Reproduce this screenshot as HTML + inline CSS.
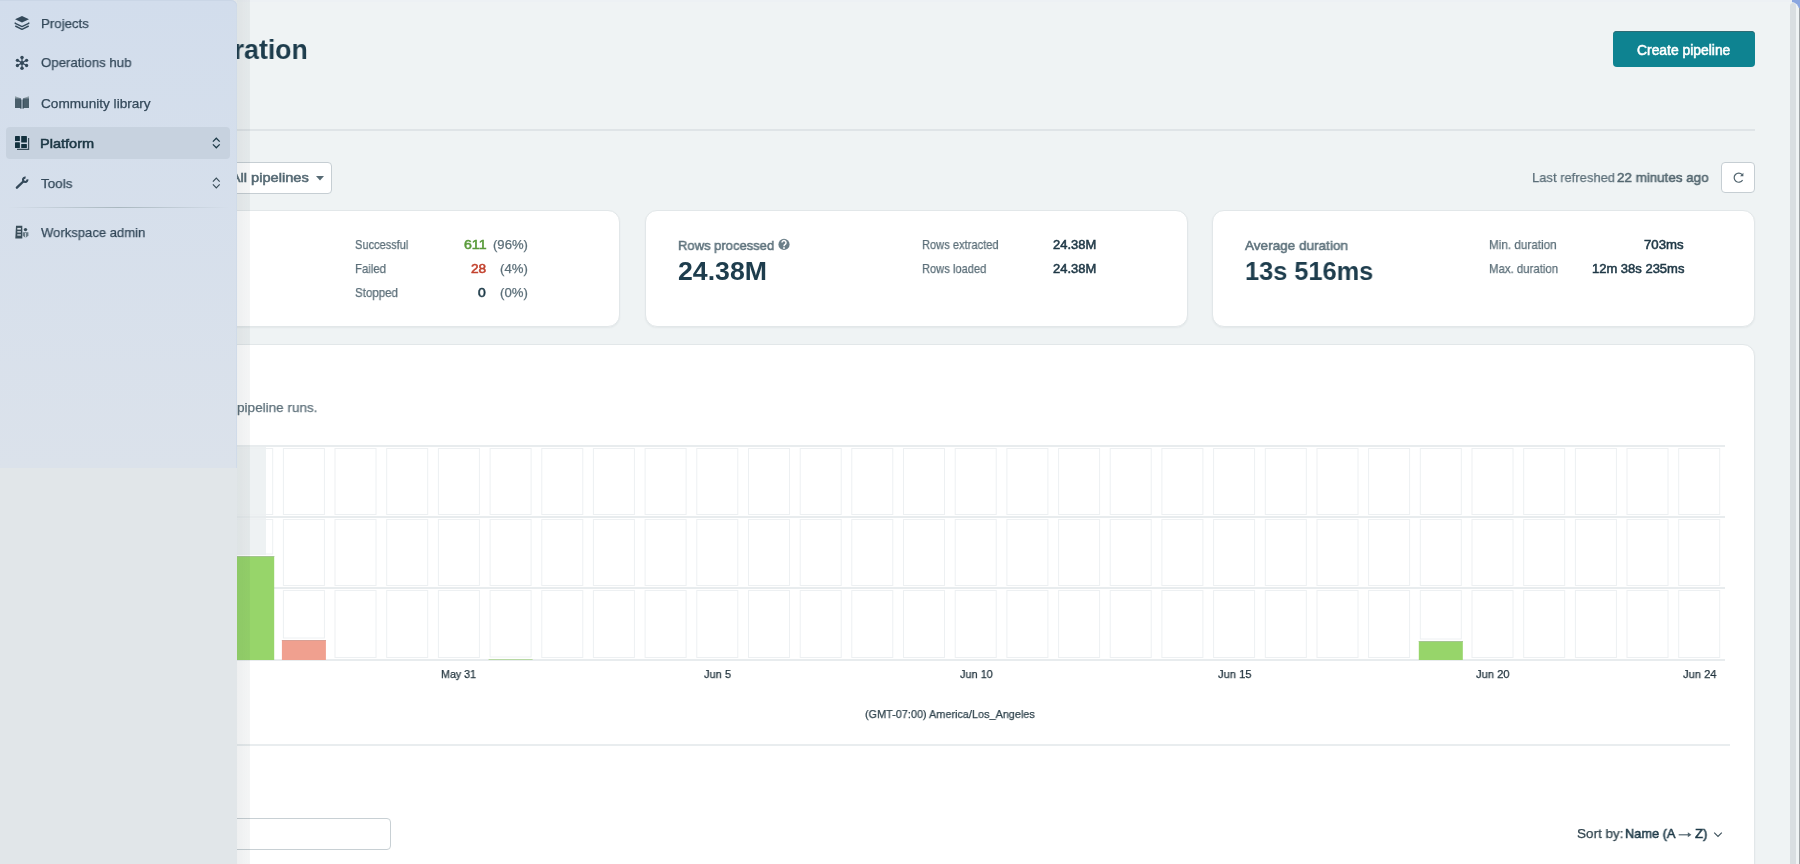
<!DOCTYPE html>
<html><head><meta charset="utf-8"><style>
html,body{margin:0;padding:0}
body{width:1800px;height:864px;overflow:hidden;position:relative;background:#edf1f4;font-family:"Liberation Sans", sans-serif}
.t{position:absolute;white-space:nowrap;line-height:1;transform-origin:0 0;will-change:transform}
.r{-webkit-text-stroke:0.25px currentColor}
.s{-webkit-text-stroke:0.55px currentColor}
.abs{position:absolute}
</style></head><body>
<div class="abs" style="right:0;top:0;width:8px;height:8px;background:#8aa6df"></div>
<div class="abs" style="left:0;top:2px;width:1799px;height:862px;background:#eff3f4;border-top-right-radius:8px"></div>
<div class="abs" style="left:1799px;top:8px;width:1px;height:856px;background:#9ea3a6"></div>
<div class="abs" style="left:1790px;top:3px;width:6px;height:861px;background:#d9dee1;border-radius:3px 3px 0 0"></div>
<!-- header -->
<div class="abs" style="left:1613px;top:31px;width:142px;height:36px;background:#0e8391;border-radius:4px;box-shadow:inset 0 1px 0 #2d6c75"></div>
<div class="abs" style="left:79px;top:129px;width:1676px;height:2px;background:#dfe4e7"></div>
<div class="abs" style="left:120px;top:162px;width:210px;height:30px;background:#fff;border:1px solid #c6ced3;border-radius:4px"></div>
<svg class="abs" style="left:0;top:0" width="1800" height="864">
<path d="M316 176 L324 176 L320 180.5 Z" fill="#566a74"/>
</svg>
<div class="abs" style="left:1721px;top:162px;width:32px;height:29px;background:#fff;border:1px solid #c6ced3;border-radius:4px"></div>
<!-- cards -->
<div class="abs" style="left:78px;top:210px;width:540px;height:115px;background:#fff;border:1px solid #e2e7e9;border-radius:12px;box-shadow:0 1px 2px rgba(30,50,60,0.06)"></div>
<div class="abs" style="left:645px;top:210px;width:541px;height:115px;background:#fff;border:1px solid #e2e7e9;border-radius:12px;box-shadow:0 1px 2px rgba(30,50,60,0.06)"></div>
<div class="abs" style="left:1212px;top:210px;width:541px;height:115px;background:#fff;border:1px solid #e2e7e9;border-radius:12px;box-shadow:0 1px 2px rgba(30,50,60,0.06)"></div>
<div class="abs" style="left:78px;top:344px;width:1675px;height:600px;background:#fff;border:1px solid #e2e7e9;border-radius:12px;box-shadow:0 1px 2px rgba(30,50,60,0.06)"></div>
<div class="abs" style="left:79px;top:744px;width:1651px;height:2px;background:#e9edef"></div>
<div class="abs" style="left:100px;top:818px;width:289px;height:30px;background:#fff;border:1px solid #c8d0d4;border-radius:4px"></div>
<svg class="abs" style="left:0;top:0" width="1800" height="864">
<rect x="230" y="447" width="36" height="108" fill="#eef2f3"/>
<rect x="180.0" y="448.5" width="41" height="66.0" fill="none" stroke="#edf0f2" stroke-width="1"/>
<rect x="180.0" y="519.5" width="41" height="66.0" fill="none" stroke="#edf0f2" stroke-width="1"/>
<rect x="180.0" y="590.5" width="41" height="67.0" fill="none" stroke="#edf0f2" stroke-width="1"/>
<rect x="231.7" y="448.5" width="41" height="66.0" fill="none" stroke="#edf0f2" stroke-width="1"/>
<rect x="231.7" y="519.5" width="41" height="34.5" fill="none" stroke="#edf0f2" stroke-width="1"/>
<rect x="283.4" y="448.5" width="41" height="66.0" fill="none" stroke="#edf0f2" stroke-width="1"/>
<rect x="283.4" y="519.5" width="41" height="66.0" fill="none" stroke="#edf0f2" stroke-width="1"/>
<rect x="283.4" y="590.5" width="41" height="47.5" fill="none" stroke="#edf0f2" stroke-width="1"/>
<rect x="335.0" y="448.5" width="41" height="66.0" fill="none" stroke="#edf0f2" stroke-width="1"/>
<rect x="335.0" y="519.5" width="41" height="66.0" fill="none" stroke="#edf0f2" stroke-width="1"/>
<rect x="335.0" y="590.5" width="41" height="67.0" fill="none" stroke="#edf0f2" stroke-width="1"/>
<rect x="386.7" y="448.5" width="41" height="66.0" fill="none" stroke="#edf0f2" stroke-width="1"/>
<rect x="386.7" y="519.5" width="41" height="66.0" fill="none" stroke="#edf0f2" stroke-width="1"/>
<rect x="386.7" y="590.5" width="41" height="67.0" fill="none" stroke="#edf0f2" stroke-width="1"/>
<rect x="438.4" y="448.5" width="41" height="66.0" fill="none" stroke="#edf0f2" stroke-width="1"/>
<rect x="438.4" y="519.5" width="41" height="66.0" fill="none" stroke="#edf0f2" stroke-width="1"/>
<rect x="438.4" y="590.5" width="41" height="67.0" fill="none" stroke="#edf0f2" stroke-width="1"/>
<rect x="490.1" y="448.5" width="41" height="66.0" fill="none" stroke="#edf0f2" stroke-width="1"/>
<rect x="490.1" y="519.5" width="41" height="66.0" fill="none" stroke="#edf0f2" stroke-width="1"/>
<rect x="490.1" y="590.5" width="41" height="66.5" fill="none" stroke="#edf0f2" stroke-width="1"/>
<rect x="541.8" y="448.5" width="41" height="66.0" fill="none" stroke="#edf0f2" stroke-width="1"/>
<rect x="541.8" y="519.5" width="41" height="66.0" fill="none" stroke="#edf0f2" stroke-width="1"/>
<rect x="541.8" y="590.5" width="41" height="67.0" fill="none" stroke="#edf0f2" stroke-width="1"/>
<rect x="593.4" y="448.5" width="41" height="66.0" fill="none" stroke="#edf0f2" stroke-width="1"/>
<rect x="593.4" y="519.5" width="41" height="66.0" fill="none" stroke="#edf0f2" stroke-width="1"/>
<rect x="593.4" y="590.5" width="41" height="67.0" fill="none" stroke="#edf0f2" stroke-width="1"/>
<rect x="645.1" y="448.5" width="41" height="66.0" fill="none" stroke="#edf0f2" stroke-width="1"/>
<rect x="645.1" y="519.5" width="41" height="66.0" fill="none" stroke="#edf0f2" stroke-width="1"/>
<rect x="645.1" y="590.5" width="41" height="67.0" fill="none" stroke="#edf0f2" stroke-width="1"/>
<rect x="696.8" y="448.5" width="41" height="66.0" fill="none" stroke="#edf0f2" stroke-width="1"/>
<rect x="696.8" y="519.5" width="41" height="66.0" fill="none" stroke="#edf0f2" stroke-width="1"/>
<rect x="696.8" y="590.5" width="41" height="67.0" fill="none" stroke="#edf0f2" stroke-width="1"/>
<rect x="748.5" y="448.5" width="41" height="66.0" fill="none" stroke="#edf0f2" stroke-width="1"/>
<rect x="748.5" y="519.5" width="41" height="66.0" fill="none" stroke="#edf0f2" stroke-width="1"/>
<rect x="748.5" y="590.5" width="41" height="67.0" fill="none" stroke="#edf0f2" stroke-width="1"/>
<rect x="800.2" y="448.5" width="41" height="66.0" fill="none" stroke="#edf0f2" stroke-width="1"/>
<rect x="800.2" y="519.5" width="41" height="66.0" fill="none" stroke="#edf0f2" stroke-width="1"/>
<rect x="800.2" y="590.5" width="41" height="67.0" fill="none" stroke="#edf0f2" stroke-width="1"/>
<rect x="851.8" y="448.5" width="41" height="66.0" fill="none" stroke="#edf0f2" stroke-width="1"/>
<rect x="851.8" y="519.5" width="41" height="66.0" fill="none" stroke="#edf0f2" stroke-width="1"/>
<rect x="851.8" y="590.5" width="41" height="67.0" fill="none" stroke="#edf0f2" stroke-width="1"/>
<rect x="903.5" y="448.5" width="41" height="66.0" fill="none" stroke="#edf0f2" stroke-width="1"/>
<rect x="903.5" y="519.5" width="41" height="66.0" fill="none" stroke="#edf0f2" stroke-width="1"/>
<rect x="903.5" y="590.5" width="41" height="67.0" fill="none" stroke="#edf0f2" stroke-width="1"/>
<rect x="955.2" y="448.5" width="41" height="66.0" fill="none" stroke="#edf0f2" stroke-width="1"/>
<rect x="955.2" y="519.5" width="41" height="66.0" fill="none" stroke="#edf0f2" stroke-width="1"/>
<rect x="955.2" y="590.5" width="41" height="67.0" fill="none" stroke="#edf0f2" stroke-width="1"/>
<rect x="1006.9" y="448.5" width="41" height="66.0" fill="none" stroke="#edf0f2" stroke-width="1"/>
<rect x="1006.9" y="519.5" width="41" height="66.0" fill="none" stroke="#edf0f2" stroke-width="1"/>
<rect x="1006.9" y="590.5" width="41" height="67.0" fill="none" stroke="#edf0f2" stroke-width="1"/>
<rect x="1058.6" y="448.5" width="41" height="66.0" fill="none" stroke="#edf0f2" stroke-width="1"/>
<rect x="1058.6" y="519.5" width="41" height="66.0" fill="none" stroke="#edf0f2" stroke-width="1"/>
<rect x="1058.6" y="590.5" width="41" height="67.0" fill="none" stroke="#edf0f2" stroke-width="1"/>
<rect x="1110.2" y="448.5" width="41" height="66.0" fill="none" stroke="#edf0f2" stroke-width="1"/>
<rect x="1110.2" y="519.5" width="41" height="66.0" fill="none" stroke="#edf0f2" stroke-width="1"/>
<rect x="1110.2" y="590.5" width="41" height="67.0" fill="none" stroke="#edf0f2" stroke-width="1"/>
<rect x="1161.9" y="448.5" width="41" height="66.0" fill="none" stroke="#edf0f2" stroke-width="1"/>
<rect x="1161.9" y="519.5" width="41" height="66.0" fill="none" stroke="#edf0f2" stroke-width="1"/>
<rect x="1161.9" y="590.5" width="41" height="67.0" fill="none" stroke="#edf0f2" stroke-width="1"/>
<rect x="1213.6" y="448.5" width="41" height="66.0" fill="none" stroke="#edf0f2" stroke-width="1"/>
<rect x="1213.6" y="519.5" width="41" height="66.0" fill="none" stroke="#edf0f2" stroke-width="1"/>
<rect x="1213.6" y="590.5" width="41" height="67.0" fill="none" stroke="#edf0f2" stroke-width="1"/>
<rect x="1265.3" y="448.5" width="41" height="66.0" fill="none" stroke="#edf0f2" stroke-width="1"/>
<rect x="1265.3" y="519.5" width="41" height="66.0" fill="none" stroke="#edf0f2" stroke-width="1"/>
<rect x="1265.3" y="590.5" width="41" height="67.0" fill="none" stroke="#edf0f2" stroke-width="1"/>
<rect x="1317.0" y="448.5" width="41" height="66.0" fill="none" stroke="#edf0f2" stroke-width="1"/>
<rect x="1317.0" y="519.5" width="41" height="66.0" fill="none" stroke="#edf0f2" stroke-width="1"/>
<rect x="1317.0" y="590.5" width="41" height="67.0" fill="none" stroke="#edf0f2" stroke-width="1"/>
<rect x="1368.6" y="448.5" width="41" height="66.0" fill="none" stroke="#edf0f2" stroke-width="1"/>
<rect x="1368.6" y="519.5" width="41" height="66.0" fill="none" stroke="#edf0f2" stroke-width="1"/>
<rect x="1368.6" y="590.5" width="41" height="67.0" fill="none" stroke="#edf0f2" stroke-width="1"/>
<rect x="1420.3" y="448.5" width="41" height="66.0" fill="none" stroke="#edf0f2" stroke-width="1"/>
<rect x="1420.3" y="519.5" width="41" height="66.0" fill="none" stroke="#edf0f2" stroke-width="1"/>
<rect x="1420.3" y="590.5" width="41" height="48.5" fill="none" stroke="#edf0f2" stroke-width="1"/>
<rect x="1472.0" y="448.5" width="41" height="66.0" fill="none" stroke="#edf0f2" stroke-width="1"/>
<rect x="1472.0" y="519.5" width="41" height="66.0" fill="none" stroke="#edf0f2" stroke-width="1"/>
<rect x="1472.0" y="590.5" width="41" height="67.0" fill="none" stroke="#edf0f2" stroke-width="1"/>
<rect x="1523.7" y="448.5" width="41" height="66.0" fill="none" stroke="#edf0f2" stroke-width="1"/>
<rect x="1523.7" y="519.5" width="41" height="66.0" fill="none" stroke="#edf0f2" stroke-width="1"/>
<rect x="1523.7" y="590.5" width="41" height="67.0" fill="none" stroke="#edf0f2" stroke-width="1"/>
<rect x="1575.4" y="448.5" width="41" height="66.0" fill="none" stroke="#edf0f2" stroke-width="1"/>
<rect x="1575.4" y="519.5" width="41" height="66.0" fill="none" stroke="#edf0f2" stroke-width="1"/>
<rect x="1575.4" y="590.5" width="41" height="67.0" fill="none" stroke="#edf0f2" stroke-width="1"/>
<rect x="1627.0" y="448.5" width="41" height="66.0" fill="none" stroke="#edf0f2" stroke-width="1"/>
<rect x="1627.0" y="519.5" width="41" height="66.0" fill="none" stroke="#edf0f2" stroke-width="1"/>
<rect x="1627.0" y="590.5" width="41" height="67.0" fill="none" stroke="#edf0f2" stroke-width="1"/>
<rect x="1678.7" y="448.5" width="41" height="66.0" fill="none" stroke="#edf0f2" stroke-width="1"/>
<rect x="1678.7" y="519.5" width="41" height="66.0" fill="none" stroke="#edf0f2" stroke-width="1"/>
<rect x="1678.7" y="590.5" width="41" height="67.0" fill="none" stroke="#edf0f2" stroke-width="1"/>
<rect x="79" y="445" width="1646" height="2" fill="#e8ecee"/>
<rect x="79" y="516" width="1646" height="2" fill="#e8ecee"/>
<rect x="79" y="587" width="1646" height="2" fill="#e8ecee"/>
<rect x="79" y="659" width="1646" height="2" fill="#e8ecee"/>
<rect x="230.2" y="556" width="44" height="104" fill="#97d56a"/>
<rect x="230.2" y="556" width="44" height="1" fill="#a5c592"/>
<rect x="281.9" y="640" width="44" height="20" fill="#f0a08f"/>
<rect x="281.9" y="640" width="44" height="1" fill="#d9a095"/>
<rect x="488.6" y="659" width="44" height="1" fill="#b7d8a3"/>
<rect x="1418.8" y="641" width="44" height="19" fill="#97d56a"/>
<rect x="1418.8" y="641" width="44" height="1" fill="#a5c592"/>
<!-- help icon -->
<circle cx="784" cy="244.4" r="5.6" fill="#6b7f89"/>
<path d="M782 242.6 A2 2 0 1 1 785.1 244.3 Q784 245 784 246.3" fill="none" stroke="#fff" stroke-width="1.5"/><circle cx="784" cy="248" r="0.9" fill="#fff"/>
<!-- refresh icon -->
<path d="M1742.2 174.6 A4.6 4.6 0 1 0 1742.6 180.2" fill="none" stroke="#52656f" stroke-width="1.2"/>
<path d="M1743.4 172.8 L1743.4 176.2 L1740 176.2 Z" fill="#52656f"/>
<!-- sort chevron -->
<path d="M1714.2 832.6 L1718 836.4 L1721.8 832.6" fill="none" stroke="#3b4f5a" stroke-width="1.1"/>
<path d="M1678.7 834.8 L1689 834.8" stroke="#52656f" stroke-width="1.2"/><path d="M1687.8 832.3 L1691.4 834.8 L1687.8 837.3 Z" fill="#52656f"/>
</svg>
<div class="t" style="left:132.90px;top:35px;font-size:28.5px;font-weight:700;color:#1d3c4c;transform:scaleX(0.9352)">Orchestration</div>
<div class="t s" style="left:1637.11px;top:44px;font-size:13.8px;font-weight:400;color:#ffffff;transform:scaleX(1.0055)">Create pipeline</div>
<div class="t s" style="left:164.25px;top:171px;font-size:13.6px;font-weight:400;color:#566a74;transform:scaleX(1.0764)">Pipelines: All pipelines</div>
<div class="t r" style="left:1532.16px;top:171px;font-size:13.6px;font-weight:400;color:#5c6f79;transform:scaleX(0.9561)">Last refreshed</div>
<div class="t s" style="left:1617.23px;top:171px;font-size:13.6px;font-weight:400;color:#53666f;transform:scaleX(0.9844)">22 minutes ago</div>
<div class="t r" style="left:355.10px;top:239px;font-size:12.6px;font-weight:400;color:#5c6f79;transform:scaleX(0.8768)">Successful</div>
<div class="t r" style="left:354.69px;top:263px;font-size:12.6px;font-weight:400;color:#5c6f79;transform:scaleX(0.9044)">Failed</div>
<div class="t r" style="left:355.08px;top:287px;font-size:12.6px;font-weight:400;color:#5c6f79;transform:scaleX(0.9133)">Stopped</div>
<div class="t s" style="left:463.69px;top:239px;font-size:12.6px;font-weight:400;color:#5a9b3b;transform:scaleX(1.1217)">611</div>
<div class="t s" style="left:471.02px;top:263px;font-size:12.6px;font-weight:400;color:#c2412d;transform:scaleX(1.0815)">28</div>
<div class="t s" style="left:478.34px;top:287px;font-size:12.6px;font-weight:400;color:#1d3a48;transform:scaleX(1.1078)">0</div>
<div class="t r" style="left:493.11px;top:239px;font-size:12.6px;font-weight:400;color:#5c6f79;transform:scaleX(1.0385)">(96%)</div>
<div class="t r" style="left:500.21px;top:263px;font-size:12.6px;font-weight:400;color:#5c6f79;transform:scaleX(1.0449)">(4%)</div>
<div class="t r" style="left:500.21px;top:287px;font-size:12.6px;font-weight:400;color:#5c6f79;transform:scaleX(1.0449)">(0%)</div>
<div class="t s" style="left:677.86px;top:239px;font-size:13.6px;font-weight:400;color:#5f737d;transform:scaleX(0.9570)">Rows processed</div>
<div class="t" style="left:677.97px;top:258px;font-size:26.5px;font-weight:700;color:#1e3d4d;transform:scaleX(1.0067)">24.38M</div>
<div class="t r" style="left:922.01px;top:239px;font-size:12.6px;font-weight:400;color:#5c6f79;transform:scaleX(0.8825)">Rows extracted</div>
<div class="t r" style="left:922.01px;top:263px;font-size:12.6px;font-weight:400;color:#5c6f79;transform:scaleX(0.8845)">Rows loaded</div>
<div class="t s" style="left:1052.85px;top:239px;font-size:12.6px;font-weight:400;color:#1f3846;transform:scaleX(1.0277)">24.38M</div>
<div class="t s" style="left:1052.85px;top:263px;font-size:12.6px;font-weight:400;color:#1f3846;transform:scaleX(1.0277)">24.38M</div>
<div class="t s" style="left:1245.00px;top:239px;font-size:13.6px;font-weight:400;color:#5f737d;transform:scaleX(0.9960)">Average duration</div>
<div class="t" style="left:1245.18px;top:258px;font-size:26.5px;font-weight:700;color:#1e3d4d;transform:scaleX(0.9571)">13s 516ms</div>
<div class="t r" style="left:1488.86px;top:239px;font-size:12.6px;font-weight:400;color:#5c6f79;transform:scaleX(0.9296)">Min. duration</div>
<div class="t r" style="left:1488.89px;top:263px;font-size:12.6px;font-weight:400;color:#5c6f79;transform:scaleX(0.9057)">Max. duration</div>
<div class="t s" style="left:1644.34px;top:239px;font-size:12.6px;font-weight:400;color:#1f3846;transform:scaleX(1.0482)">703ms</div>
<div class="t s" style="left:1591.53px;top:263px;font-size:12.6px;font-weight:400;color:#1f3846;transform:scaleX(1.0310)">12m 38s 235ms</div>
<div class="t r" style="left:237.12px;top:401px;font-size:13.6px;font-weight:400;color:#5c6f79;transform:scaleX(0.9944)">pipeline runs.</div>
<div class="t r" style="left:441.14px;top:668px;font-size:11.6px;font-weight:400;color:#22343e;transform:scaleX(0.9235)">May 31</div>
<div class="t r" style="left:704.43px;top:668px;font-size:11.6px;font-weight:400;color:#22343e;transform:scaleX(0.9522)">Jun 5</div>
<div class="t r" style="left:959.84px;top:668px;font-size:11.6px;font-weight:400;color:#22343e;transform:scaleX(0.9439)">Jun 10</div>
<div class="t r" style="left:1217.53px;top:668px;font-size:11.6px;font-weight:400;color:#22343e;transform:scaleX(0.9631)">Jun 15</div>
<div class="t r" style="left:1476.03px;top:668px;font-size:11.6px;font-weight:400;color:#22343e;transform:scaleX(0.9643)">Jun 20</div>
<div class="t r" style="left:1682.73px;top:668px;font-size:11.6px;font-weight:400;color:#22343e;transform:scaleX(0.9627)">Jun 24</div>
<div class="t r" style="left:864.95px;top:708px;font-size:11.6px;font-weight:400;color:#2f434d;transform:scaleX(0.9379)">(GMT-07:00) America/Los_Angeles</div>
<div class="t r" style="left:1576.79px;top:827px;font-size:13.6px;font-weight:400;color:#2f434d;transform:scaleX(0.9908)">Sort by:</div>
<div class="t s" style="left:1624.78px;top:827px;font-size:13.6px;font-weight:400;color:#1e3a48;transform:scaleX(0.9417)">Name (A</div>
<div class="t s" style="left:1694.60px;top:827px;font-size:13.6px;font-weight:400;color:#1e3a48;transform:scaleX(0.9689)">Z)</div>
<!-- left nav bg + shadow -->
<div class="abs" style="left:0;top:0;width:237px;height:864px;background:#e1e6e9"></div>
<div class="abs" style="left:237px;top:0;width:13px;height:864px;background:linear-gradient(to right, rgba(40,60,70,0.08), rgba(40,60,70,0.05))"></div>
<!-- popup -->
<div class="abs" style="left:0;top:0;width:237px;height:468px;background:linear-gradient(#d2ddec,#dbe2eb);border-top-right-radius:6px;box-shadow:inset 0 1px 0 #cad6e6, inset -1px 0 0 #d0dbe9"></div>
<div class="abs" style="left:6px;top:127px;width:224px;height:32px;background:#c7d2df;border-radius:4px"></div>
<div class="abs" style="left:8px;top:207px;width:221px;height:1px;background:linear-gradient(to right, rgba(150,168,178,0), #a9b7bf 50%, rgba(150,168,178,0))"></div>
<svg class="abs" style="left:0;top:0" width="240" height="260">
<!-- projects layers -->
<path d="M22 16 L29 19.3 L22 22.6 L15 19.3 Z" fill="#34495a"/>
<path d="M15.3 22.5 L15.3 23.4 L22 26.6 L28.7 23.4 L28.7 22.5" fill="none" stroke="#34495a" stroke-width="1.4" stroke-linejoin="round"/>
<path d="M15.3 26 L22 29.3 L28.7 26" fill="none" stroke="#34495a" stroke-width="1.4" stroke-linejoin="round"/>
<!-- ops hub -->
<g fill="#34495a" stroke="#34495a">
<line x1="22" y1="57.6" x2="22" y2="68.2" stroke-width="1.2"/>
<line x1="17.4" y1="60.3" x2="26.5" y2="65.5" stroke-width="1.2"/>
<line x1="17.4" y1="65.5" x2="26.5" y2="60.3" stroke-width="1.2"/>
<circle cx="22" cy="62.9" r="2" stroke="none"/>
<circle cx="22" cy="57.5" r="1.75" stroke="none"/>
<circle cx="22" cy="68.3" r="1.75" stroke="none"/>
<circle cx="17.4" cy="60.3" r="1.65" stroke="none"/>
<circle cx="26.6" cy="60.3" r="1.65" stroke="none"/>
<circle cx="17.4" cy="65.5" r="1.65" stroke="none"/>
<circle cx="26.6" cy="65.5" r="1.65" stroke="none"/>
</g>
<!-- book -->
<path d="M15 96.2 L21.6 98.4 L22.4 98.4 L29 96.2 L29 98.6 L15 98.6 Z" fill="#8b9ba4"/>
<rect x="15" y="98.3" width="5.9" height="9.7" fill="#4a5f6c"/>
<rect x="23.1" y="98.3" width="5.9" height="9.7" fill="#4a5f6c"/>
<rect x="20.3" y="99.5" width="1.2" height="9.2" fill="#2f4654"/>
<rect x="22.5" y="99.5" width="1.2" height="9.2" fill="#2f4654"/>
<!-- platform -->
<g fill="#12303d">
<rect x="15" y="136" width="4.9" height="4.9" rx="0.5"/>
<rect x="21.2" y="136" width="5.7" height="6.5" rx="0.5"/>
<rect x="15" y="142.2" width="4.9" height="5.8" rx="0.5"/>
<rect x="21.2" y="143.9" width="5.7" height="4.1" rx="0.5"/>
</g>
<path d="M28.6 138 L28.6 149.3 L17 149.3" fill="none" stroke="#3a4e5a" stroke-width="1.2"/>
<!-- chevrons -->
<path d="M212.9 141.6 L216.3 138.2 L219.7 141.6 M212.9 144.4 L216.3 147.8 L219.7 144.4" fill="none" stroke="#1d3a48" stroke-width="1.3"/>
<path d="M212.9 181.6 L216.3 178.2 L219.7 181.6 M212.9 184.4 L216.3 187.8 L219.7 184.4" fill="none" stroke="#3a4e5a" stroke-width="1.2"/>
<!-- wrench -->
<path d="M16.9 187.7 L23.3 181.5" stroke="#34495a" stroke-width="2.4" stroke-linecap="round"/>
<path d="M27.37 179.42 A2.2 2.2 0 1 1 25.58 177.63" fill="none" stroke="#34495a" stroke-width="2.1"/>
<!-- workspace admin -->
<path d="M16 225.8 L22.3 225.8 L22.3 238.6 L15.3 238.6 Z" fill="#3a4e5a"/>
<rect x="17.3" y="227.9" width="3.6" height="1.7" fill="#dbe2eb"/>
<rect x="17.3" y="231.2" width="3.6" height="1.3" fill="#dbe2eb"/>
<rect x="17.3" y="234.3" width="3.6" height="1.3" fill="#dbe2eb"/>
<circle cx="25.5" cy="229.6" r="1.7" fill="#3a4e5a"/>
<path d="M22.7 232.2 L28.4 232.2 L28.4 235.2 Q25.55 239.6 22.7 235.2 Z" fill="#6a7c87"/>
<rect x="25.05" y="233" width="1" height="4.6" fill="#c9d3dd"/>
</svg>
<div class="t r" style="left:40.64px;top:17px;font-size:13.6px;font-weight:400;color:#34495a;transform:scaleX(0.9741)">Projects</div>
<div class="t r" style="left:41.10px;top:56px;font-size:13.6px;font-weight:400;color:#34495a;transform:scaleX(0.9728)">Operations hub</div>
<div class="t r" style="left:40.72px;top:97px;font-size:13.6px;font-weight:400;color:#34495a;transform:scaleX(1.0012)">Community library</div>
<div class="t s" style="left:40.24px;top:137px;font-size:13.6px;font-weight:400;color:#1c3744;transform:scaleX(1.0701)">Platform</div>
<div class="t r" style="left:41.13px;top:177px;font-size:13.6px;font-weight:400;color:#34495a;transform:scaleX(0.9868)">Tools</div>
<div class="t r" style="left:41.23px;top:226px;font-size:13.6px;font-weight:400;color:#34495a;transform:scaleX(0.9606)">Workspace admin</div>
</body></html>
